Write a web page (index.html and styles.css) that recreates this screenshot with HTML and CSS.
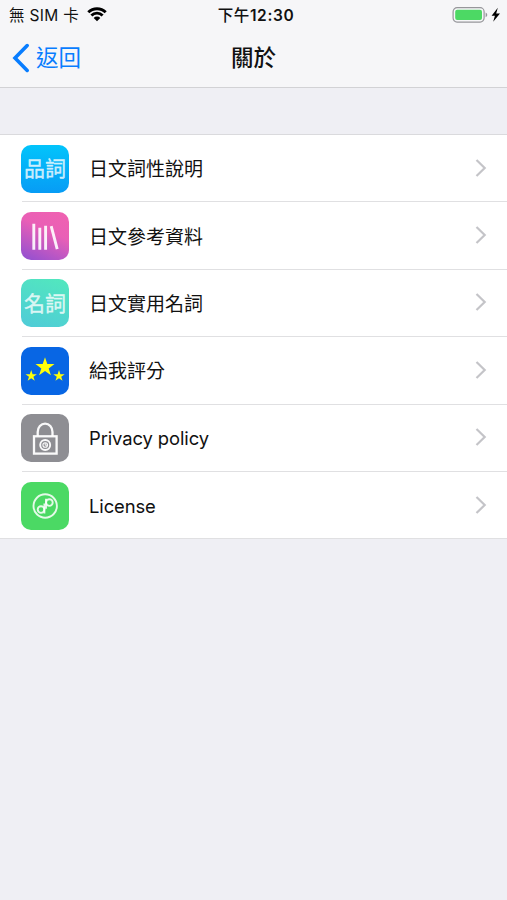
FILE: index.html
```
<!doctype html>
<html lang="zh-Hant">
<head>
    <meta charset="UTF-8">
    <title>關於</title>
    <link rel="stylesheet" href="styles.css">
</head>
<body>
    <header>
        <div class="status-bar">
            <div class="carrier">
                <span>無 SIM 卡</span>
                <svg class="wifi" width="20" height="15" viewBox="0 0 20 15">
                    <path d="M1.3 5.3a12.3 12.3 0 0 1 17.4 0M4.4 8.5a7.9 7.9 0 0 1 11.2 0" fill="none" stroke="#000" stroke-width="2.9"/>
                    <path d="M6.7 10.9a4.6 4.6 0 0 1 6.6 0L10 14.2z"/>
                </svg>
            </div>
            <div class="time"><span>下午</span>12:30</div>
            <div class="battery">
                <svg width="49" height="16" viewBox="0 0 49 16">
                    <rect x="1.1" y=".7" width="31" height="14.4" rx="4" fill="none" stroke="#96969a" stroke-width="1.2"/>
                    <rect x="3.2" y="2.8" width="26.8" height="10.2" rx="2" fill="#4cd964"/>
                    <path d="M33.6 5.5q1.7 1 1.7 2.4t-1.7 2.4z" fill="#96969a"/>
                    <path d="M45.8 .8L39.6 8.8h3.3l-1.7 6L48 6.6h-3.8z"/>
                </svg>
            </div>
        </div>
        <nav class="nav-bar">
            <a class="back">
                <svg width="18" height="30" viewBox="0 0 18 30">
                    <path d="M15.2 2.6L3 15l12.2 12.4" fill="none" stroke="#087dff" stroke-width="3.6" stroke-linecap="round"/>
                </svg>
                <span>返回</span>
            </a>
            <h1>關於</h1>
        </nav>
    </header>

    <ul class="menu">
        <li>
            <div class="icon icon-blue"><span>品詞</span></div>
            <div class="row cjk"><span>日文詞性說明</span><svg class="chevron" viewBox="0 0 12 20"><path d="M1.5 2l8.2 8-8.2 8"/></svg></div>
        </li>
        <li>
            <div class="icon icon-pink">
                <svg viewBox="0 0 48 48">
                    <path d="M12.8 11.8v26M18.8 15.8v22M24.6 13.8v24M30.2 14.2l6 23" fill="none" stroke="#fff" stroke-opacity=".9" stroke-width="2.9"/>
                </svg>
            </div>
            <div class="row cjk"><span>日文參考資料</span><svg class="chevron" viewBox="0 0 12 20"><path d="M1.5 2l8.2 8-8.2 8"/></svg></div>
        </li>
        <li>
            <div class="icon icon-mint"><span>名詞</span></div>
            <div class="row cjk"><span>日文實用名詞</span><svg class="chevron" viewBox="0 0 12 20"><path d="M1.5 2l8.2 8-8.2 8"/></svg></div>
        </li>
        <li>
            <div class="icon icon-stars">
                <svg viewBox="0 0 48 48">
                    <defs>
                        <path id="star" d="M0-10L2.3-3.1H9.5L3.7 1.2 5.9 8.1 0 3.8-5.9 8.1-3.7 1.2-9.5-3.1H-2.3z"/>
                    </defs>
                    <g fill="#ffff08">
                        <use href="#star" transform="translate(24 20.2)"/>
                        <use href="#star" transform="translate(10.2 29) scale(.6)"/>
                        <use href="#star" transform="translate(38 29) scale(.6)"/>
                    </g>
                </svg>
            </div>
            <div class="row cjk"><span>給我評分</span><svg class="chevron" viewBox="0 0 12 20"><path d="M1.5 2l8.2 8-8.2 8"/></svg></div>
        </li>
        <li>
            <div class="icon icon-gray">
                <svg viewBox="0 0 48 48" fill="none" stroke="#fff" stroke-opacity=".95">
                    <path d="M16.7 22V18a7.4 8.4 0 0 1 14.8 0v4" stroke-width="2.3"/>
                    <rect x="13" y="22.3" width="22.6" height="17.3" stroke-width="2.3"/>
                    <circle cx="24.2" cy="31" r="5" stroke-width="1.9"/>
                    <circle cx="24.2" cy="31" r="2.3" stroke-width="1.1"/>
                    <path d="M24.2 29v2.2h2.2" stroke-width="1"/>
                </svg>
            </div>
            <div class="row latin"><span>Privacy policy</span><svg class="chevron" viewBox="0 0 12 20"><path d="M1.5 2l8.2 8-8.2 8"/></svg></div>
        </li>
        <li>
            <div class="icon icon-green">
                <svg viewBox="0 0 48 48" fill="none" stroke="#fff" stroke-opacity=".85" stroke-width="1.9">
                    <circle cx="24.2" cy="24" r="11.7"/>
                    <circle cx="28.4" cy="20.6" r="3.3"/>
                    <circle cx="20" cy="27.6" r="3.3"/>
                    <path d="M25 16.8v10M23.4 31.4V21.4"/>
                </svg>
            </div>
            <div class="row latin"><span>License</span><svg class="chevron" viewBox="0 0 12 20"><path d="M1.5 2l8.2 8-8.2 8"/></svg></div>
        </li>
    </ul>
</body>
</html>
```
FILE: styles.css
```
body {
    margin: 0;
    min-height: 900px;
    background-color: #efeff4;
    color: #111;
    font-family: Inter, "Noto Sans CJK TC", sans-serif;
}

header {
    height: 87px;
    background-color: #f6f6f8;
    border-bottom: 1px solid #d2d2d5;
}

.status-bar {
    display: grid;
    grid-template-columns: 1fr auto 1fr;
    height: 30px;
    font-size: 15.5px;
    line-height: 32px;
}

.carrier {
    display: flex;
    align-items: center;
    gap: 8px;
    padding-left: 9px;
    letter-spacing: 0.3px;
}

.wifi {
    margin-top: -3px;
}

.time {
    font-weight: 600;
    padding-left: 5px;
    letter-spacing: 0.6px;
}

.time span {
    font-weight: 500;
}

.battery {
    display: flex;
    align-items: center;
    justify-content: flex-end;
    padding-right: 6px;
    padding-bottom: 2px;
}

.nav-bar {
    display: grid;
    grid-template-columns: 1fr auto 1fr;
    align-items: center;
    height: 56px;
}

.back {
    display: flex;
    align-items: center;
    gap: 6px;
    padding-left: 12px;
    color: #087dff;
    font-size: 22.5px;
}

.back span {
    padding-bottom: 4px;
}

h1 {
    margin: 0;
    padding-bottom: 4px;
    font-size: 22.5px;
    font-weight: 500;
}

.menu {
    list-style: none;
    margin: 46px 0 0;
    padding: 0;
    background-color: #fff;
    border-top: 1px solid #dadadd;
}

.menu li {
    display: flex;
    align-items: center;
    height: 67.4px;
    padding-left: 21px;
    background: linear-gradient(#e0e0e2, #e0e0e2) 22px 100% / 100% 1px no-repeat;
}

.menu li:last-child {
    background-position: 0 100%;
}

.icon {
    flex: none;
    display: flex;
    align-items: center;
    justify-content: center;
    width: 48px;
    height: 48px;
    border-radius: 10px;
}

.icon svg {
    width: 48px;
    height: 48px;
}

.icon span {
    font-size: 21px;
    font-weight: 400;
    line-height: 1;
    color: rgba(255, 255, 255, 0.75);
    -webkit-text-stroke: 0.4px rgba(255, 255, 255, 0.7);
}

.icon-blue {
    background: linear-gradient(#02c4fb, #079cf5);
}

.icon-pink {
    background: linear-gradient(25deg, #8e4fd2, #e95fb6 60%, #f062b0);
}

.icon-mint {
    background: linear-gradient(20deg, #4fcbd8, #52e8bd);
}

.icon-stars {
    background-color: #0866e4;
}

.icon-gray {
    background-color: #8e8e93;
}

.icon-green {
    background-color: #4bd964;
}

.row {
    flex: 1;
    display: flex;
    align-items: center;
    justify-content: space-between;
    padding: 0 20px 0 20px;
    font-size: 19px;
}

.cjk span {
    padding-bottom: 2px;
}

.latin {
    font-size: 18.4px;
}

.latin span {
    letter-spacing: -0.1px;
}

.chevron {
    width: 12px;
    height: 20px;
    margin-top: -2px;
    fill: none;
    stroke: #c4c4c8;
    stroke-width: 2.2;
}
```
